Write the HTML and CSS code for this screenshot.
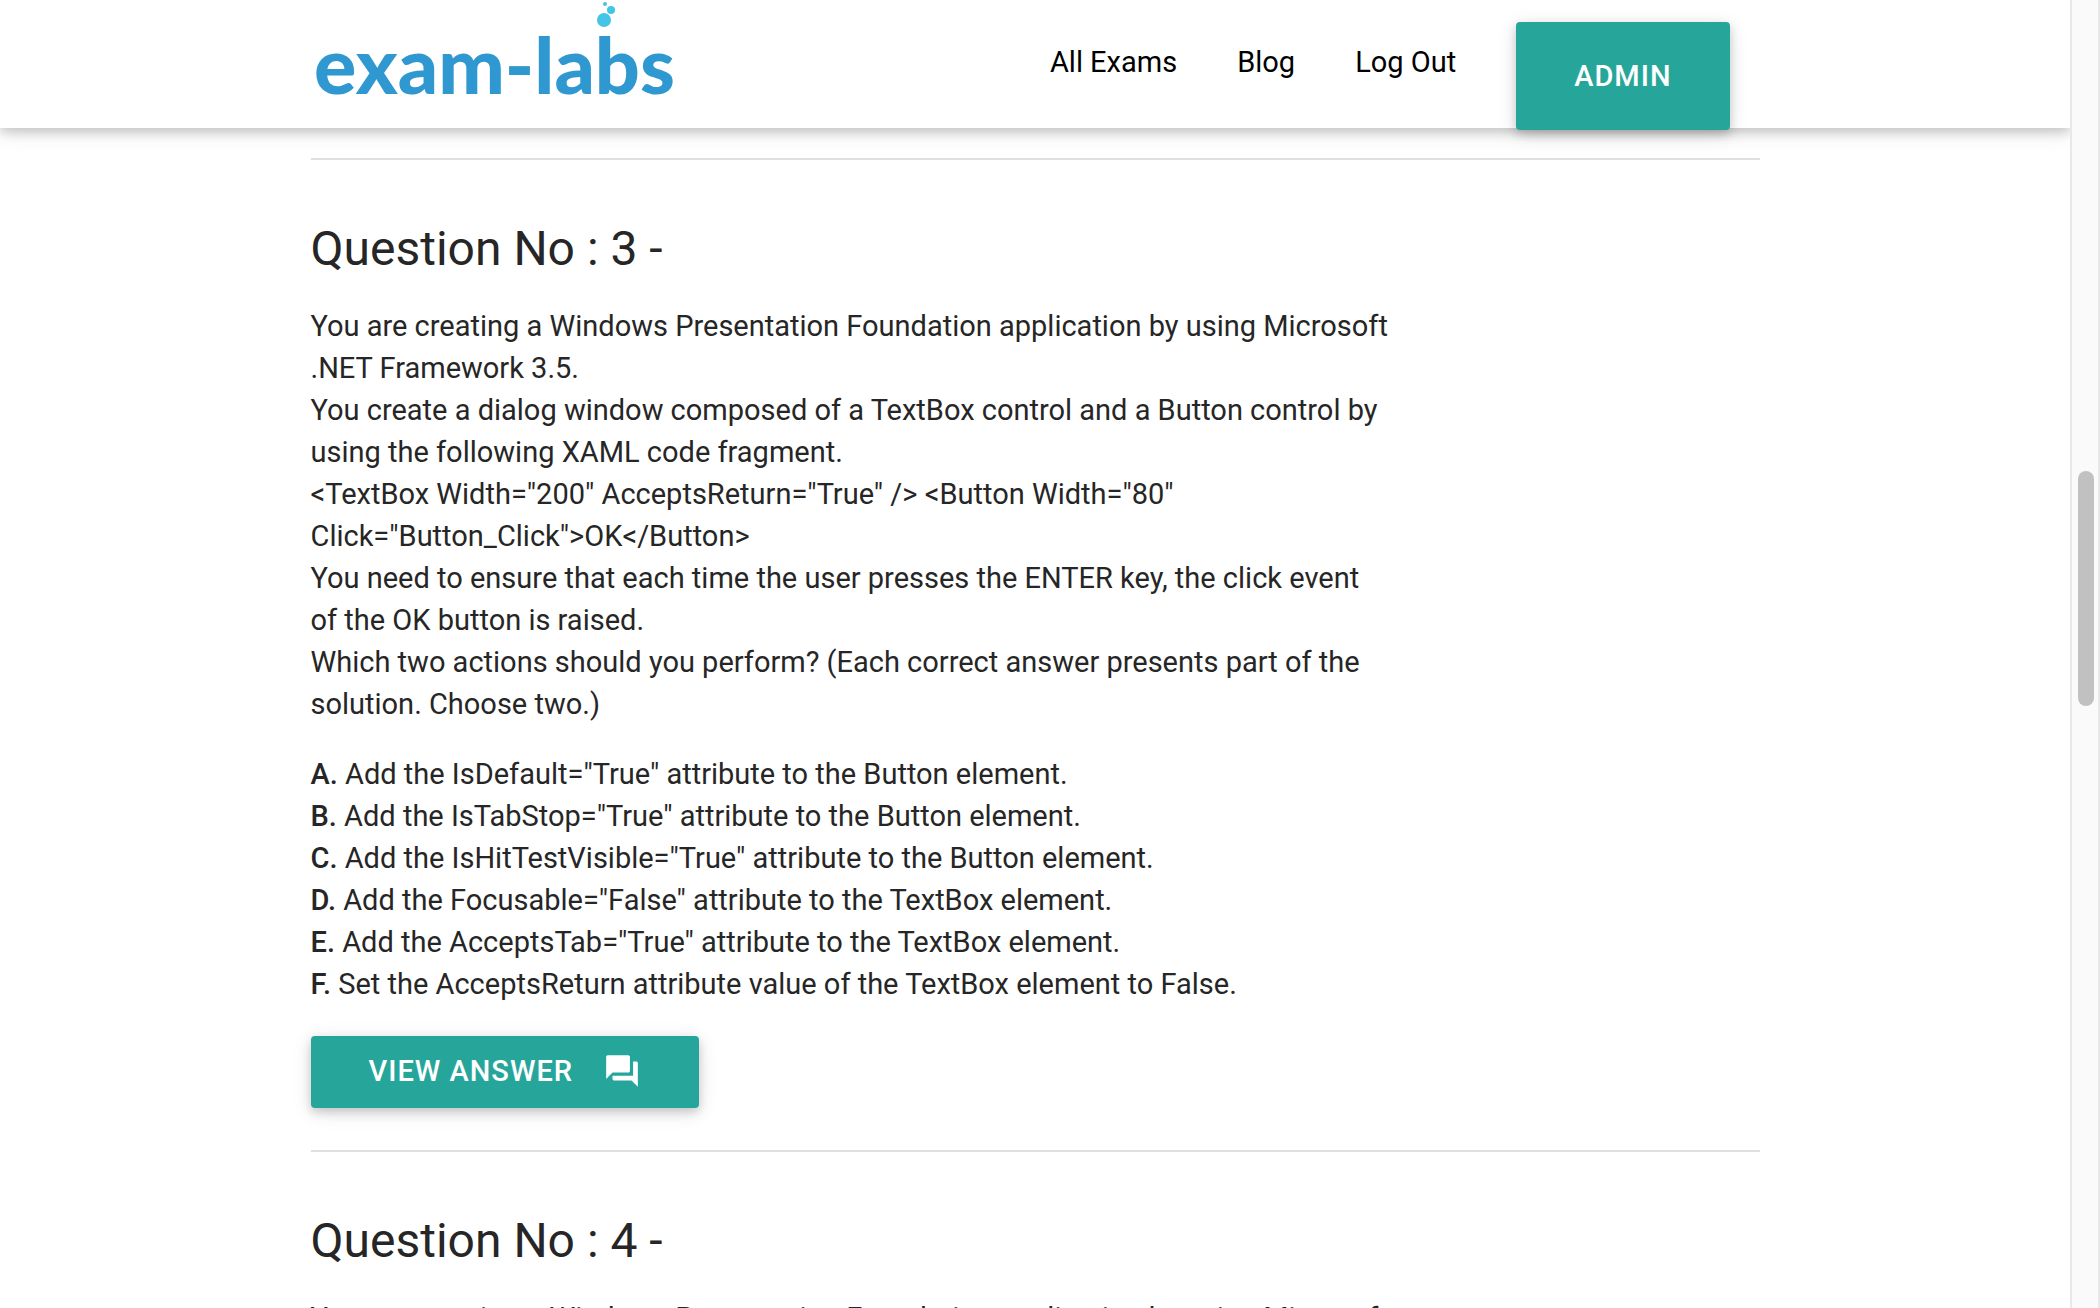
FILE: index.html
```html
<!DOCTYPE html>
<html lang="en">
<head>
  <meta charset="UTF-8" />
  <meta name="viewport" content="width=device-width, initial-scale=1" />
  <title>Exam-Labs</title>
  <link rel="stylesheet" href="styles.css">
</head>
<body>
  <div class="viewport">
    <header class="navbar">
      <div class="container nav-wrapper">
        <a class="logo" href="#" aria-label="exam-labs">
          <svg width="380" height="120" viewBox="0 0 380 120">
            <text class="logo-text" x="3" y="94">exam-labs</text>
            <circle class="bubble" cx="294" cy="4" r="2" />
            <circle class="bubble" cx="300" cy="10" r="4" />
            <circle class="bubble" cx="293" cy="20" r="7" />
          </svg>
        </a>
        <nav class="nav-links">
          <a href="#">All Exams</a>
          <a href="#">Blog</a>
          <a href="#">Log Out</a>
          <a class="btn btn-admin" href="#">Admin</a>
        </nav>
      </div>
    </header>

    <main class="container">
      <hr>
      <section class="question">
        <h5>Question No : 3 -</h5>
        <div class="question-body">
          <p>You are creating a Windows Presentation Foundation application by using Microsoft .NET Framework 3.5.<br>
          You create a dialog window composed of a TextBox control and a Button control by using the following XAML code fragment.<br>
          &lt;TextBox Width="200" AcceptsReturn="True" /&gt; &lt;Button Width="80" Click="Button_Click"&gt;OK&lt;/Button&gt;<br>
          You need to ensure that each time the user presses the ENTER key, the click event of the OK button is raised.<br>
          Which two actions should you perform? (Each correct answer presents part of the solution. Choose two.)</p>
          <p><b>A.</b> Add the IsDefault="True" attribute to the Button element.<br>
          <b>B.</b> Add the IsTabStop="True" attribute to the Button element.<br>
          <b>C.</b> Add the IsHitTestVisible="True" attribute to the Button element.<br>
          <b>D.</b> Add the Focusable="False" attribute to the TextBox element.<br>
          <b>E.</b> Add the AcceptsTab="True" attribute to the TextBox element.<br>
          <b>F.</b> Set the AcceptsReturn attribute value of the TextBox element to False.</p>
        </div>
        <button class="btn btn-answer" type="button">View Answer
          <svg class="icon" viewBox="0 0 24 24" aria-hidden="true"><path d="M21 6h-2v9H6v2c0 .55.45 1 1 1h11l4 4V7c0-.55-.45-1-1-1zm-4 6V3c0-.55-.45-1-1-1H3c-.55 0-1 .45-1 1v14l4-4h10c.55 0 1-.45 1-1z" /></svg>
        </button>
      </section>
      <hr>
      <section class="question">
        <h5>Question No : 4 -</h5>
        <div class="question-body">
          <p>You are creating a Windows Presentation Foundation application by using Microsoft .NET Framework 3.5.</p>
        </div>
      </section>
    </main>
  </div>
  <div class="scrollbar"><div class="thumb"></div></div>
</body>
</html>
```

FILE: styles.css
```css
* {
  box-sizing: border-box;
}
body {
  display: flex;
  height: 100vh;
  margin: 0;
  overflow: hidden;
  background: #fff;
  color: #262626;
  font-family: Roboto, "Liberation Sans", sans-serif;
  font-size: 29px;
  line-height: 42px;
}
a {
  color: #000;
  text-decoration: none;
}
.viewport {
  flex: 1;
  overflow: hidden;
}
.container {
  width: 70%;
  margin: 0 auto;
}

/* navbar */
.navbar {
  position: relative;
  height: 128px;
  background: #fff;
  box-shadow: 0 4px 10px 0 rgba(0, 0, 0, 0.16), 0 4px 20px 0 rgba(0, 0, 0, 0.12);
}
.nav-wrapper {
  display: flex;
  justify-content: space-between;
  align-items: flex-start;
  padding-right: 30px;
}
.logo-text {
  fill: #3098d0;
  font-family: Lato, sans-serif;
  font-size: 79px;
  font-weight: 900;
}
.bubble {
  fill: #45c5e6;
}
.nav-links {
  display: flex;
  align-items: flex-start;
  gap: 60px;
  padding-top: 22px;
}
.nav-links a {
  padding-top: 19px;
}

/* buttons */
.btn {
  border: none;
  border-radius: 4px;
  background: #26a69a;
  color: #fff;
  font-family: inherit;
  font-size: 29px;
  font-weight: 500;
  letter-spacing: 1px;
  text-transform: uppercase;
  box-shadow: 0 4px 10px 0 rgba(0, 0, 0, 0.16), 0 4px 20px 0 rgba(0, 0, 0, 0.12);
}
.nav-links .btn-admin {
  padding: 33px 58px;
  color: #fff;
}
.btn-answer {
  display: flex;
  align-items: center;
  gap: 30px;
  height: 72px;
  padding: 0 58px 2px;
  cursor: pointer;
}
.icon {
  width: 38px;
  height: 38px;
  fill: #fff;
}

/* questions */
main {
  padding-top: 30px;
}
hr {
  height: 2px;
  margin: 0;
  border: none;
  background: #e0e0e0;
}
.question {
  padding: 63px 0 42px;
}
h5 {
  margin: 0 0 30px;
  font-size: 48px;
  font-weight: 400;
  line-height: 52px;
}
.question-body {
  width: 75%;
  margin-bottom: 31px;
  padding-right: 8px;
}
p {
  margin: 0 0 28px;
}
p:last-child {
  margin-bottom: 0;
}
b {
  font-weight: 500;
}

/* page scrollbar */
.scrollbar {
  width: 30px;
  padding: 36vh 4px 0 6px;
  border: 2px solid #e8e8e8;
  border-width: 0 2px;
  background: #fafafa;
}
.thumb {
  width: 16px;
  height: 18vh;
  border-radius: 8px;
  background: #c1c1c1;
}
```
